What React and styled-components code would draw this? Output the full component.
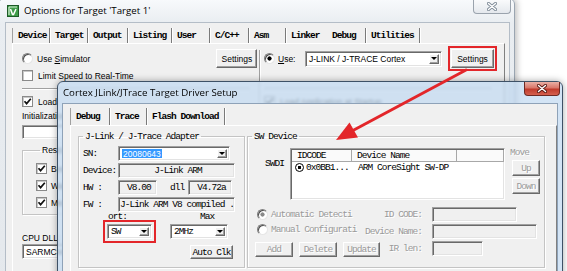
import styled, { createGlobalStyle, css } from "styled-components";

const mono = `"Liberation Mono", "DejaVu Sans Mono", monospace`;
const sans = `"Liberation Sans", Arial, sans-serif`;
const titleFont = `"Open Sans", "Liberation Sans", sans-serif`;

const sunken = css`
  border: 1px solid;
  border-color: #a0a0a0 #fff #fff #a0a0a0;
  box-shadow: inset 1px 1px 0 #696969, inset -1px -1px 0 #e3e3e3;
`;

const raised = css`
  border: 1px solid;
  border-color: #fff #696969 #696969 #fff;
  box-shadow: inset -1px -1px 0 #a0a0a0;
`;

const monoText = css`
  font-family: ${mono};
  font-size: 9.5px;
  letter-spacing: -0.95px;
  white-space: nowrap;
`;

const GlobalStyle = createGlobalStyle`
  html, body {
    margin: 0;
    padding: 0;
    background: #fff;
    overflow: hidden;
  }
  * {
    box-sizing: border-box;
  }
`;

const Desktop = styled.div`
  position: relative;
  width: 567px;
  height: 271px;
  overflow: hidden;
  background: #fff;
  font-family: ${sans};
  font-size: 8.5px;
  color: #000;
`;

/* ---------- window chrome ---------- */

const OuterWindow = styled.section`
  position: absolute;
  left: -2px;
  top: -2px;
  width: 517px;
  height: 300px;
  display: flex;
  flex-direction: column;
  padding: 0 4px 0 6px;
  border: 1px solid #9aa5b1;
  border-radius: 6px 6px 0 0;
  background: linear-gradient(#f8fafc, #e9edf1 24px, #e4e8ec);
  box-shadow: 2px 0 6px rgba(0, 0, 0, 0.25);
`;

const TitleBar = styled.header`
  flex: none;
  height: ${(p) => p.$h}px;
  display: flex;
  align-items: center;
  gap: 5px;
  padding-left: ${(p) => p.$pl}px;
`;

const WindowTitle = styled.span`
  font-family: ${titleFont};
  font-size: 9.7px;
  color: #000;
  white-space: nowrap;
`;

const CloseButton = styled.div`
  width: ${(p) => p.$w}px;
  height: ${(p) => p.$h}px;
  margin-left: auto;
  margin-right: ${(p) => p.$mr}px;
  align-self: flex-start;
  display: flex;
  align-items: center;
  justify-content: center;
  border: 1px solid ${(p) => (p.$red ? "#6e2a24" : "#9aa3ad")};
  border-top: none;
  border-radius: 0 0 4px 4px;
  background: ${(p) =>
    p.$red
      ? "linear-gradient(#eab0a5, #d9776a 45%, #c03b2c 55%, #d4604f)"
      : "linear-gradient(#fbfcfd, #e4e8ed)"};
`;

function CloseGlyph({ edge }) {
  const d = "M1.5 1.5 L8.5 7.5 M8.5 1.5 L1.5 7.5";
  return (
    <svg width="10" height="9" viewBox="0 0 10 9">
      <path d={d} stroke={edge} strokeWidth="3.2" strokeLinecap="round" />
      <path d={d} stroke="#fff" strokeWidth="1.4" strokeLinecap="round" />
    </svg>
  );
}

function AppIcon() {
  return (
    <svg width="12" height="12" viewBox="0 0 12 12">
      <rect x="0.5" y="0.5" width="11" height="11" fill="#3f9c49" stroke="#1d5a26" />
      <path d="M2 2 H10 M2 2 V10" stroke="#d8f0d8" strokeWidth="1.2" />
      <path d="M3.5 4 L5.5 9.5 L6.5 9.5 L9 4" stroke="#fff" strokeWidth="1.5" fill="none" />
    </svg>
  );
}

const OuterClient = styled.div`
  flex: 1;
  display: flex;
  flex-direction: column;
  padding: 5px 4px 0 6px;
  background: #f0f0f0;
  border: 1px solid #b4bdc7;
`;

const InnerWindow = styled.section`
  position: absolute;
  left: 57px;
  top: 81px;
  width: 506px;
  height: 200px;
  display: flex;
  flex-direction: column;
  padding: 0 4px;
  border: 1px solid #3e5166;
  border-radius: 6px 6px 0 0;
  background: rgba(196, 218, 241, 0.74);
  backdrop-filter: blur(1.6px);
  box-shadow: 0 0 7px rgba(0, 0, 0, 0.35);
`;

const InnerClient = styled.div`
  flex: 1;
  display: flex;
  flex-direction: column;
  padding: 4px 0 0 7px;
  background: #f0f0f0;
  border: 1px solid #8ea2b8;
`;

/* ---------- tabs ---------- */

const TabStrip = styled.div`
  flex: none;
  height: ${(p) => p.$h}px;
  display: flex;
`;

const Tab = styled.div`
  width: ${(p) => p.$w}px;
  display: flex;
  align-items: center;
  padding-left: 5px;
  ${monoText};
  font-weight: bold;
  border-left: ${(p) => (p.$first ? "1px solid #a0a0a0" : "none")};
  border-right: 1px solid ${(p) => (p.$sep ? "#7a7a7a" : "transparent")};
  box-shadow: ${(p) => (p.$sep ? "1px 0 0 #fff" : "none")};
`;

const TabPanel = styled.div`
  flex: 1;
  display: flex;
  padding: ${(p) => p.$pad};
  border: 1px solid;
  border-color: #fff #808080 #808080 #fff;
`;

/* ---------- common controls ---------- */

const Column = styled.div`
  width: ${(p) => p.$w}px;
  display: flex;
  flex-direction: column;
  padding: ${(p) => p.$pad || "0"};
`;

const VSep = styled.div`
  width: 2px;
  margin-top: 1px;
  border-left: 1px solid #a0a0a0;
  border-right: 1px solid #fff;
`;

const HRule = styled.div`
  width: ${(p) => p.$w}px;
  height: 2px;
  margin-top: ${(p) => p.$mt}px;
  border-top: 1px solid #a0a0a0;
  border-bottom: 1px solid #fff;
`;

const CtrlRow = styled.div`
  height: ${(p) => p.$h}px;
  margin-top: ${(p) => p.$mt || 0}px;
  padding-left: ${(p) => p.$pl || 0}px;
  display: flex;
  align-items: center;
  gap: ${(p) => (p.$gap === undefined ? 4 : p.$gap)}px;
  white-space: nowrap;
`;

const Radio = styled.span`
  flex: none;
  width: 11px;
  height: 11px;
  border-radius: 50%;
  border: 1px solid;
  border-color: #808080 #e6e6e6 #e6e6e6 #808080;
  background: ${(p) =>
    p.$checked
      ? `radial-gradient(circle, ${p.$disabled ? "#8a8a8a" : "#000"} 1.8px, #fff 2.4px)`
      : "#fff"};
  box-shadow: inset 1px 1px 0 #505050;
`;

const CheckBox = styled.span`
  flex: none;
  width: 11px;
  height: 11px;
  display: flex;
  align-items: center;
  justify-content: center;
  background: #fff;
  border: 1px solid #8a8a8a;
  box-shadow: inset 1px 1px 0 #c8c8c8;
`;

function Check({ checked }) {
  return (
    <CheckBox>
      {checked && (
        <svg width="9" height="9" viewBox="0 0 9 9">
          <path d="M1.5 4.2 L3.6 6.6 L7.8 1.8" stroke="#111" strokeWidth="1.7" fill="none" />
        </svg>
      )}
    </CheckBox>
  );
}

const Button = styled.div`
  flex: none;
  width: ${(p) => p.$w}px;
  height: ${(p) => p.$h}px;
  margin-left: ${(p) => p.$ml || 0}px;
  align-self: ${(p) => p.$self || "auto"};
  justify-self: ${(p) => p.$self || "auto"};
  display: flex;
  align-items: center;
  justify-content: center;
  background: #f0f0f0;
  ${raised};
  ${(p) => (p.$mono ? monoText : "font-size: 8.5px;")};
  color: ${(p) => (p.$disabled ? "#9a9a9a" : "#000")};
  text-shadow: ${(p) => (p.$disabled ? "1px 1px 0 #fff" : "none")};
  outline: ${(p) => (p.$marked ? "2px solid #e3262a" : "none")};
  outline-offset: 1px;
`;

const Select = styled.div`
  flex: none;
  width: ${(p) => p.$w}px;
  height: ${(p) => p.$h}px;
  justify-self: start;
  display: flex;
  align-items: stretch;
  background: #fff;
  ${sunken};
  padding: 2px;
  outline: ${(p) => (p.$marked ? "2px solid #e3262a" : "none")};
  outline-offset: 2px;
`;

const SelectText = styled.span`
  flex: 1;
  display: flex;
  align-items: center;
  overflow: hidden;
  white-space: nowrap;
  padding-left: 1px;
  ${(p) => p.$mono && monoText};
`;

const SelectArrow = styled.span`
  flex: none;
  width: 10px;
  display: flex;
  align-items: center;
  justify-content: center;
  background: #f0f0f0;
  ${raised};

  &::after {
    content: "";
    border-left: 3px solid transparent;
    border-right: 3px solid transparent;
    border-top: 3px solid #000;
  }
`;

const Selected = styled.span`
  padding: 0 1px;
  background: #3399ff;
  color: #fff;
  line-height: 10px;
`;

const EditBox = styled.div`
  width: ${(p) => p.$w}px;
  height: ${(p) => p.$h}px;
  margin-top: ${(p) => p.$mt || 0}px;
  display: flex;
  align-items: center;
  justify-content: ${(p) => (p.$center ? "center" : "flex-start")};
  padding-left: ${(p) => (p.$pl === undefined ? 3 : p.$pl)}px;
  overflow: hidden;
  white-space: nowrap;
  background: ${(p) => (p.$white ? "#fff" : "#f0f0f0")};
  ${sunken};
  ${(p) => p.$mono && monoText};
`;

const Label = styled.span`
  margin-top: ${(p) => p.$mt || 0}px;
  white-space: nowrap;
  line-height: 10px;
`;

const MonoLabel = styled.span`
  ${monoText};
  width: ${(p) => (p.$w ? `${p.$w}px` : "auto")};
  flex: none;
  padding-left: ${(p) => p.$pl || 0}px;
  margin-left: ${(p) => p.$ml || 0}px;
  margin-top: ${(p) => p.$mt || 0}px;
  line-height: 10px;
  color: ${(p) => (p.$muted ? "#9a9a9a" : "#000")};
  text-shadow: ${(p) => (p.$muted ? "1px 1px 0 #fff" : "none")};
`;

const GroupBox = styled.fieldset`
  width: ${(p) => p.$w}px;
  height: ${(p) => p.$h}px;
  margin: ${(p) => p.$m || "0"};
  padding: ${(p) => p.$pad};
  display: flex;
  flex-direction: column;
  border: 1px solid #c4c4c4;
  box-shadow: 1px 1px 0 #fff, inset 1px 1px 0 #fff;
`;

const GroupLegend = styled.legend`
  padding: 0 2px;
  margin-left: ${(p) => p.$ml || 0}px;
  font-size: 8.5px;
  line-height: 10px;
  ${(p) =>
    p.$mono &&
    css`
      ${monoText};
      line-height: 11px;
    `}
`;

/* ---------- inner dialog parts ---------- */

const FieldRow = styled.div`
  height: 15px;
  margin-bottom: 2px;
  display: flex;
  align-items: center;
`;

const PortGrid = styled.div`
  margin: -2px 0 0 24px;
  display: grid;
  grid-template-columns: 45px 63px;
  grid-template-rows: 10px 15px 18px;
  column-gap: 18px;
  row-gap: 2px;
`;

const SwTop = styled.div`
  display: flex;
  padding-left: 13px;
`;

const ListBox = styled.div`
  width: 215px;
  height: 52px;
  margin-top: 2px;
  display: flex;
  flex-direction: column;
  background: #fff;
  ${sunken};
  padding: 1px 0 0 1px;
`;

const ListGrid = styled.div`
  display: grid;
  grid-template-columns: 60px 105px 1fr;
  height: ${(p) => p.$h}px;
`;

const HeaderCell = styled.div`
  display: flex;
  align-items: center;
  padding-left: 5px;
  ${monoText};
  background: #fafafa;
  border-right: 1px solid #a8a8a8;
  border-bottom: 1px solid #a8a8a8;
`;

const ListCell = styled.div`
  display: flex;
  align-items: center;
  gap: 2px;
  padding-left: ${(p) => p.$pl}px;
  ${monoText};
`;

const DotRadio = styled.span`
  flex: none;
  width: 9px;
  height: 9px;
  border-radius: 50%;
  border: 1.5px solid #000;
  background: radial-gradient(circle, #000 1.4px, #fff 1.9px);
`;

const MoveColumn = styled.div`
  margin-left: 5px;
  display: flex;
  flex-direction: column;
  gap: 2px;
`;

const SwBottom = styled.div`
  display: flex;
  margin-top: 7px;
`;

const ModeColumn = styled.div`
  width: 128px;
  padding-left: 3px;
  display: flex;
  flex-direction: column;
`;

const ButtonRow = styled.div`
  display: flex;
  gap: 6px;
  margin-top: 5px;
`;

const ParamColumn = styled.div`
  display: flex;
  flex-direction: column;
  gap: 2px;
`;

const ParamRow = styled.div`
  height: 15px;
  display: flex;
  align-items: center;
  gap: 10px;
`;

const ParamLabel = styled.span`
  width: 42px;
  display: flex;
  justify-content: flex-end;
  ${monoText};
  color: #9a9a9a;
  text-shadow: 1px 1px 0 #fff;
`;

const ArrowLayer = styled.svg`
  position: absolute;
  left: 0;
  top: 0;
  pointer-events: none;
`;

const outerTabs = [
  { label: "Device", w: 38, sep: true, first: true },
  { label: "Target", w: 38, sep: true },
  { label: "Output", w: 40, sep: true },
  { label: "Listing", w: 44, sep: true },
  { label: "User", w: 38, sep: true },
  { label: "C/C++", w: 39, sep: true },
  { label: "Asm", w: 37, sep: true },
  { label: "Linker", w: 41, sep: false },
  { label: "Debug", w: 39, sep: true },
  { label: "Utilities", w: 54, sep: true },
];

// the driver window hides the rest of these labels
const restoreItems = ["Break", "Watch", "Memory"];

function Dropdown({ w, h, children, mono, marked }) {
  return (
    <Select $w={w} $h={h} $marked={marked}>
      <SelectText $mono={mono}>{children}</SelectText>
      <SelectArrow />
    </Select>
  );
}

export default function App() {
  return (
    <>
      <GlobalStyle />
      <Desktop>
        <OuterWindow>
          <TitleBar $h={23} $pl={2}>
            <AppIcon />
            <WindowTitle>Options for Target 'Target 1'</WindowTitle>
            <CloseButton $w={38} $h={15} $mr={-1}>
              <CloseGlyph edge="#7f8b98" />
            </CloseButton>
          </TitleBar>
          <OuterClient>
            <TabStrip $h={15}>
              {outerTabs.map((t) => (
                <Tab key={t.label} $w={t.w} $sep={t.sep} $first={t.first}>
                  {t.label}
                </Tab>
              ))}
            </TabStrip>
            <TabPanel $pad="5px 0 0 9px">
              <Column $w={237} $pad="0 6px 0 0">
                <CtrlRow $h={19}>
                  <Radio />
                  <Label>
                    Use <u>S</u>imulator
                  </Label>
                  <Button $w={41} $h={19} $ml={122}>
                    Settings
                  </Button>
                </CtrlRow>
                <CtrlRow $h={11} $mt={2} $gap={5}>
                  <Check />
                  <Label>Limit Speed to Real-Time</Label>
                </CtrlRow>
                <HRule $w={228} $mt={7} />
                <CtrlRow $h={11} $mt={6} $gap={5}>
                  <Check checked />
                  <Label>Load</Label>
                </CtrlRow>
                <Label $mt={4}>Initialization</Label>
                <EditBox $w={200} $h={14} $mt={4} $white />
                <GroupBox $w={228} $h={70} $m="6px 0 0" $pad="5px 0 4px 13px">
                  <GroupLegend $ml={4}>Restore</GroupLegend>
                  {restoreItems.map((item) => (
                    <CtrlRow key={item} $h={17} $gap={4}>
                      <Check checked />
                      <Label>{item}</Label>
                    </CtrlRow>
                  ))}
                </GroupBox>
                <Label $mt={18}>CPU DLL:</Label>
                <EditBox $w={100} $h={15} $mt={1} $white>
                  SARMCM3
                </EditBox>
              </Column>
              <VSep />
              <Column $w={240} $pad="0 0 0 3px">
                <CtrlRow $h={19} $gap={3}>
                  <Radio $checked />
                  <Label style={{ width: 24 }}>
                    <u>U</u>se:
                  </Label>
                  <Dropdown w={137} h={16}>
                    J-LINK / J-TRACE Cortex
                  </Dropdown>
                  <Button $w={43} $h={19} $ml={6} $marked>
                    Settings
                  </Button>
                </CtrlRow>
                <CtrlRow $h={11} $mt={2} />
                <HRule $w={228} $mt={7} />
                <CtrlRow $h={11} $mt={6} $gap={5}>
                  <Check checked />
                  <Label>Load Application at Startup</Label>
                </CtrlRow>
              </Column>
            </TabPanel>
          </OuterClient>
        </OuterWindow>

        <InnerWindow>
          <TitleBar $h={21} $pl={1}>
            <WindowTitle>Cortex JLink/JTrace Target Driver Setup</WindowTitle>
            <CloseButton $w={36} $h={14} $mr={-2} $red>
              <CloseGlyph edge="#5a1c16" />
            </CloseButton>
          </TitleBar>
          <InnerClient>
            <TabStrip $h={17}>
              <Tab $w={40} $sep $first>
                Debug
              </Tab>
              <Tab $w={37} $sep>
                Trace
              </Tab>
              <Tab $w={78} $sep>
                Flash Download
              </Tab>
            </TabStrip>
            <TabPanel $pad="5px 0 0 7px">
              <GroupBox $w={167} $h={137} $pad="4px 0 0 4px">
                <GroupLegend $mono>J-Link / J-Trace Adapter</GroupLegend>
                <FieldRow>
                  <MonoLabel $w={35}>SN:</MonoLabel>
                  <Select $w={112} $h={15}>
                    <SelectText>
                      <Selected>20080643</Selected>
                    </SelectText>
                    <SelectArrow />
                  </Select>
                </FieldRow>
                <FieldRow>
                  <MonoLabel $w={35}>Device:</MonoLabel>
                  <EditBox $w={117} $h={15} $center $mono>
                    J-Link ARM
                  </EditBox>
                </FieldRow>
                <FieldRow>
                  <MonoLabel $w={35}>HW :</MonoLabel>
                  <EditBox $w={39} $h={15} $center $mono>
                    V8.00
                  </EditBox>
                  <MonoLabel $w={18} $ml={13}>
                    dll
                  </MonoLabel>
                  <EditBox $w={44} $h={15} $center $mono>
                    V4.72a
                  </EditBox>
                </FieldRow>
                <FieldRow>
                  <MonoLabel $w={35}>FW :</MonoLabel>
                  <EditBox $w={117} $h={15} $pl={1} $mono>
                    J-Link ARM V8 compiled .
                  </EditBox>
                </FieldRow>
                <PortGrid>
                  <MonoLabel $pl={1}>ort:</MonoLabel>
                  <MonoLabel $pl={30}>Max</MonoLabel>
                  <Dropdown w={45} h={15} mono marked>
                    SW
                  </Dropdown>
                  <Dropdown w={58} h={15} mono>
                    2MHz
                  </Dropdown>
                  <span />
                  <Button $w={43} $h={14} $mono $self="end">
                    Auto Clk
                  </Button>
                </PortGrid>
              </GroupBox>
              <GroupBox $w={298} $h={137} $m="0 0 0 2px" $pad="4px 0 0 4px">
                <GroupLegend $mono>SW Device</GroupLegend>
                <SwTop>
                  <MonoLabel $w={25} $mt={13}>
                    SWDI
                  </MonoLabel>
                  <ListBox>
                    <ListGrid $h={11}>
                      <HeaderCell>IDCODE</HeaderCell>
                      <HeaderCell>Device Name</HeaderCell>
                      <HeaderCell />
                    </ListGrid>
                    <ListGrid $h={13}>
                      <ListCell $pl={3}>
                        <DotRadio />
                        0x0BB1...
                      </ListCell>
                      <ListCell $pl={6}>ARM CoreSight SW-DP</ListCell>
                    </ListGrid>
                  </ListBox>
                  <MoveColumn>
                    <MonoLabel $muted $mt={2}>
                      Move
                    </MonoLabel>
                    <Button $w={28} $h={16} $ml={2} $mono $disabled>
                      Up
                    </Button>
                    <Button $w={28} $h={16} $ml={2} $mono $disabled>
                      Down
                    </Button>
                  </MoveColumn>
                </SwTop>
                <SwBottom>
                  <ModeColumn>
                    <CtrlRow $h={15} $pl={2} $gap={3}>
                      <Radio $checked $disabled />
                      <MonoLabel $muted>Automatic Detecti</MonoLabel>
                    </CtrlRow>
                    <CtrlRow $h={15} $pl={2} $gap={3}>
                      <Radio $disabled />
                      <MonoLabel $muted>Manual Configurati</MonoLabel>
                    </CtrlRow>
                    <ButtonRow>
                      <Button $w={38} $h={15} $mono $disabled>
                        Add
                      </Button>
                      <Button $w={38} $h={15} $mono $disabled>
                        Delete
                      </Button>
                      <Button $w={37} $h={15} $mono $disabled>
                        Update
                      </Button>
                    </ButtonRow>
                  </ModeColumn>
                  <ParamColumn>
                    <ParamRow>
                      <ParamLabel>ID CODE:</ParamLabel>
                      <EditBox $w={85} $h={15} />
                    </ParamRow>
                    <ParamRow>
                      <ParamLabel>Device Name:</ParamLabel>
                      <EditBox $w={105} $h={15} />
                    </ParamRow>
                    <ParamRow>
                      <ParamLabel>IR len:</ParamLabel>
                      <EditBox $w={51} $h={15} />
                    </ParamRow>
                  </ParamColumn>
                </SwBottom>
              </GroupBox>
            </TabPanel>
          </InnerClient>
        </InnerWindow>

        <ArrowLayer width="567" height="271" viewBox="0 0 567 271">
          <line x1="466" y1="70" x2="352" y2="131" stroke="#e3262a" strokeWidth="3" strokeLinecap="round" />
          <polygon points="336,140 358,137.5 349.5,122.5" fill="#e3262a" />
        </ArrowLayer>
      </Desktop>
    </>
  );
}
